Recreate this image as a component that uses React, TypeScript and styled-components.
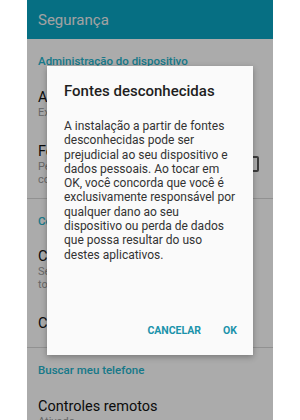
import React from 'react';
import styled, { createGlobalStyle } from 'styled-components';

const GlobalStyle = createGlobalStyle`
	html, body {
		margin: 0;
		padding: 0;
		background: #ffffff;
	}
	body {
		font-family: Roboto, "Liberation Sans", Arial, sans-serif;
	}
`;

type Item = {
	title: string,
	lines?: string[],
	checkbox?: boolean
};

type Section = {
	header: string,
	items: Item[]
};

const sections: Section[] = [
	{
		header: 'Administração do dispositivo',
		items: [
			{ title: 'Administradores do dispositivo', lines: ['Exibir ou desativar administradores'] },
			{ title: 'Fontes desconhecidas', lines: ['Permitir instalação de aplicativos', 'com origem diferente da Play Store'], checkbox: true }
		]
	},
	{
		header: 'Codificação',
		items: [
			{ title: 'Codificar dispositivo', lines: ['Senha necessária para decodificar', 'toda vez que ligá-lo'] },
			{ title: 'Codificar cartão SD' }
		]
	},
	{
		header: 'Buscar meu telefone',
		items: [
			{ title: 'Controles remotos', lines: ['Ativado'] }
		]
	}
];

const App: React.FC = () => {
	return <Page>
				<GlobalStyle />
				<Screen>
					<AppBar>Segurança</AppBar>
					{sections.map((section, i) => (
						<React.Fragment key={section.header}>
							{i > 0 && <Divider />}
							<SectionHeader>{section.header}</SectionHeader>
							{section.items.map(item => (
								<Row key={item.title}>
									<RowText>
										<RowTitle>{item.title}</RowTitle>
										{item.lines && item.lines.map(line => <RowSub key={line}>{line}</RowSub>)}
									</RowText>
									{item.checkbox && <Checkbox />}
								</Row>
							))}
						</React.Fragment>
					))}
					<Scrim />
					<Dialog>
						<DialogTitle>Fontes desconhecidas</DialogTitle>
						<DialogBody>
							A instalação a partir de fontes desconhecidas pode ser prejudicial ao seu dispositivo e dados pessoais. Ao tocar em OK, você concorda que você é exclusivamente responsável por qualquer dano ao seu dispositivo ou perda de dados que possa resultar do uso destes aplicativos.
						</DialogBody>
						<Actions>
							<ActionButton>Cancelar</ActionButton>
							<ActionButton>OK</ActionButton>
						</Actions>
					</Dialog>
				</Screen>
			</Page>;
};

const Page = styled.div`
	width: 300px;
	height: 420px;
	display: flex;
	justify-content: center;
	overflow: hidden;
`

const Screen = styled.div`
	position: relative;
	width: 246px;
	height: 420px;
	background: #ffffff;
	overflow: hidden;
	box-shadow: inset -1px 0 0 rgba(255,255,255,0.5);
`

const AppBar = styled.div`
	height: 39px;
	background: #0aa6c4;
	color: #f2f2f2;
	font-size: 15px;
	display: flex;
	align-items: center;
	padding-left: 11px;
	box-sizing: border-box;
`

const SectionHeader = styled.div`
	padding: 15px 11px 8.5px;
	font-size: 11.5px;
	line-height: 14px;
	font-weight: 500;
	color: #24b4cc;
	white-space: nowrap;
`

const Divider = styled.div`
	height: 1px;
	background: #d8d8d8;
`

const Row = styled.div`
	display: flex;
	align-items: center;
	padding: 12px 14px 12px 11px;
	min-height: 44px;
	box-sizing: border-box;
`

const RowText = styled.div`
	flex: 1;
	min-width: 0;
	display: flex;
	flex-direction: column;
	align-self: flex-start;
`

const RowTitle = styled.div`
	font-size: 14.5px;
	line-height: 17px;
	color: #111111;
	white-space: nowrap;
`

const RowSub = styled.div`
	font-size: 11px;
	line-height: 13px;
	color: #9a9a9a;
	white-space: nowrap;
`

const Checkbox = styled.div`
	width: 10px;
	height: 12px;
	border: 2px solid #5a5a5a;
	border-radius: 2px;
	margin-left: 8px;
	flex-shrink: 0;
`

const Scrim = styled.div`
	position: absolute;
	inset: 0;
	background: rgba(0,0,0,0.33);
`

const Dialog = styled.div`
	position: absolute;
	left: 20px;
	top: 66px;
	width: 206px;
	height: 289px;
	background: #fafafa;
	box-shadow: 0 2px 6px rgba(0,0,0,0.3);
	display: flex;
	flex-direction: column;
	padding: 15px 14px 0 17px;
	box-sizing: border-box;
`

const DialogTitle = styled.div`
	font-size: 15px;
	line-height: 20px;
	font-weight: 500;
	color: #1e1e1e;
`

const DialogBody = styled.p`
	margin: 18px 0 0;
	font-size: 12px;
	line-height: 14.3px;
	color: #333333;
`

const Actions = styled.div`
	margin-top: auto;
	margin-right: 2px;
	display: flex;
	justify-content: flex-end;
	align-items: center;
	gap: 22px;
	padding-bottom: 17px;
`

const ActionButton = styled.div`
	font-size: 10.5px;
	line-height: 14px;
	font-weight: 700;
	text-transform: uppercase;
	color: #1b93ab;
`

export default App;
